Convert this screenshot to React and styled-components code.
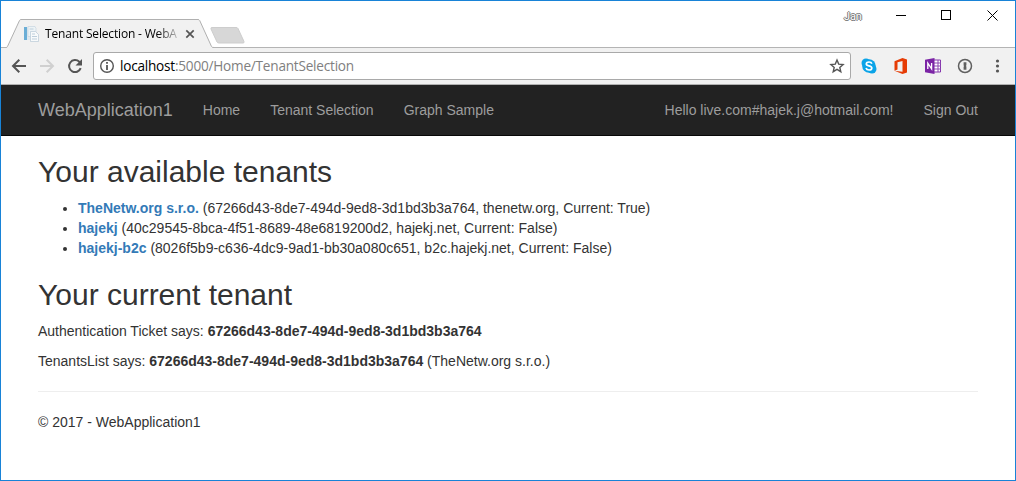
import React from 'react';
import styled, { createGlobalStyle } from 'styled-components';

const GlobalStyle = createGlobalStyle`
  *, *::before, *::after { box-sizing: border-box; }
  body { margin: 0; background: #fff; }
`;

const Window = styled.div`
  width: 1016px;
  height: 481px;
  border: 1px solid #1883d7;
  background: #fff;
  overflow: hidden;
  font-family: "Liberation Sans", Arial, sans-serif;
  font-size: 14px;
  line-height: 20px;
  color: #333;
`;

const TitleBar = styled.div`
  height: 47px;
  display: flex;
  justify-content: space-between;
  align-items: flex-start;
  background: linear-gradient(#b4b4b4, #b4b4b4) bottom / 100% 1px no-repeat;
`;

const TabStrip = styled.div`
  display: flex;
  padding: 18px 0 0 5px;
`;

const Tab = styled.div`
  position: relative;
  width: 208px;
  height: 29px;
  display: flex;
  align-items: center;
  padding-left: 17px;
`;

const TabShape = styled.svg`
  position: absolute;
  left: 0;
  top: 0;
`;

const Favicon = styled.svg`
  position: relative;
  flex: none;
`;

const TabTitle = styled.span`
  position: relative;
  width: 134px;
  margin-left: 6px;
  white-space: nowrap;
  font: 12px/18px "Open Sans", sans-serif;
  letter-spacing: -0.17px;
  color: #000;
  mask-image: linear-gradient(90deg, #000 112px, transparent 138px);
`;

const TabClose = styled.svg`
  position: relative;
  margin-left: 6px;
`;

const NewTab = styled.svg`
  margin: 7px 0 0 -4px;
`;

const Controls = styled.div`
  display: flex;
  padding: 8px 16px 0 0;
`;

const UserName = styled.span`
  width: 18px;
  margin-right: 34px;
  font: 11px/15px Roboto, sans-serif;
  letter-spacing: -0.1px;
  color: #fff;
  text-shadow: 1px 0 0 #777, -1px 0 0 #777, 0 1px 0 #777, 0 -1px 0 #777;
`;

const Toolbar = styled.div`
  height: 37px;
  display: flex;
  align-items: center;
  padding: 0 10px 1px;
  background: #f1f1f1;
  border-bottom: 1px solid #b0b0b0;
`;

const Icon = styled.svg`
  flex: none;
  margin-left: ${(p) => p.$gap || 0}px;
`;

const AddressBar = styled.div`
  width: 758px;
  height: 28px;
  margin-left: 10px;
  padding: 0 5px;
  display: flex;
  align-items: center;
  background: #fff;
  border: 1px solid #a9a9a9;
  border-radius: 3px;
`;

const Url = styled.span`
  flex: 1;
  margin-left: 5px;
  font: 13.6px/20px "Open Sans", sans-serif;
  letter-spacing: -0.22px;
  color: #808080;
`;

const Host = styled.span`
  color: #000;
`;

const Navbar = styled.nav`
  height: 51px;
  background: #222;
  border-bottom: 1px solid #080808;
`;

const Container = styled.div`
  width: 970px;
  margin: 0 auto;
  padding: 0 15px;
`;

const NavRow = styled(Container)`
  display: flex;
`;

const Brand = styled.a`
  padding: 15px 15px 15px 0;
  font-size: 18px;
  color: #9d9d9d;
`;

const NavLink = styled.a`
  padding: 15px;
  color: #9d9d9d;
`;

const NavRight = styled.div`
  display: flex;
  margin-left: auto;
  margin-right: -15px;
`;

const Heading = styled.h2`
  margin: ${(p) => p.$top}px 0 10px;
  font-size: 30px;
  font-weight: 400;
  line-height: 33px;
`;

const TenantList = styled.ul`
  margin: 0 0 10px;
  padding-left: 40px;
`;

const TenantLink = styled.a`
  font-weight: 700;
  color: #337ab7;
`;

const Text = styled.p`
  margin: 0 0 10px;
`;

const Divider = styled.hr`
  margin: 20px 0;
  border: 0;
  border-top: 1px solid #eee;
`;

const tenants = [
  ['TheNetw.org s.r.o.', '(67266d43-8de7-494d-9ed8-3d1bd3b3a764, thenetw.org, Current: True)'],
  ['hajekj', '(40c29545-8bca-4f51-8689-48e6819200d2, hajekj.net, Current: False)'],
  ['hajekj-b2c', '(8026f5b9-c636-4dc9-9ad1-bb30a080c651, b2c.hajekj.net, Current: False)'],
];

function BrowserTabs() {
  return (
    <TitleBar>
      <TabStrip>
        <Tab>
          <TabShape width="208" height="29">
            <path d="M0 28.5H1L13.5 1.5Q14 .5 15 .5H192Q193.200 .5 193.700 1.500L205.500 27.500Q206 28.500 207 28.500H208V29H0Z" fill="#f1f1f1" />
            <path d="M0 28.500Q1 28.500 1.500 27.500L13.500 1.500Q14 .5 15 .5H192Q193.200 .5 193.700 1.500L205.500 27.500Q206 28.500 208 28.500" fill="none" stroke="#b0b0b0" />
          </TabShape>
          <Favicon width="16" height="16" viewBox="0 0 16 16">
            <path d="M1 1h9v13H1z" fill="#dfe8ef" />
            <path d="M1 1h3v13H1z" fill="#6baed6" />
            <path d="M5 .5h7l1 2v8H5z" fill="#edf3f6" stroke="#c7d5df" strokeWidth=".7" />
            <path d="M7.500 5.500h5l3 3v7h-8z" fill="#f8fafb" stroke="#b9cad7" strokeWidth=".7" />
            <path d="M6.500 3h4M9 8h3M9 10.500h5M9 13h5" stroke="#bdcedb" />
          </Favicon>
          <TabTitle>Tenant Selection - WebA</TabTitle>
          <TabClose width="10" height="10" viewBox="0 0 10 10">
            <path d="M1.300 1.300l7.400 7.400M8.700 1.300L1.300 8.700" stroke="#555" strokeWidth="1.700" />
          </TabClose>
        </Tab>
        <NewTab width="36" height="19">
          <path d="M2 1.500H26Q27.500 1.500 28 2.500L34 15.500Q34.500 17 33 17H9Q7.500 17 7 16L1 3Q.5 1.500 2 1.500Z" fill="#d7d7d7" stroke="#cdcdcd" />
        </NewTab>
      </TabStrip>
      <Controls>
        <UserName>Jan</UserName>
        <svg width="103" height="14" viewBox="0 0 103 14" shapeRendering="crispEdges">
          <path d="M0 6.500h10M45.500 1.500h9v9h-9z" fill="none" stroke="#000" />
          <path d="M91.500 1.500l10 10M101.500 1.500l-10 10" fill="none" stroke="#000" shapeRendering="auto" />
        </svg>
      </Controls>
    </TitleBar>
  );
}

function BrowserToolbar() {
  return (
    <Toolbar>
      <Icon width="16" height="16" viewBox="0 0 16 16">
        <path d="M15 8H2.500M8.300 1.700L2 8l6.300 6.300" fill="none" stroke="#555" strokeWidth="2" />
      </Icon>
      <Icon $gap="12" width="16" height="16" viewBox="0 0 16 16">
        <path d="M1 8h12.500M7.700 1.700L14 8l-6.300 6.300" fill="none" stroke="#d0d0d0" strokeWidth="2" />
      </Icon>
      <Icon $gap="12" width="16" height="16" viewBox="0 0 16 16">
        <path d="M13.700 10.200A6 6 0 1 1 12.300 3.800L14 5.500" fill="none" stroke="#555" strokeWidth="2" />
        <path d="M15 1v6.500H8.500z" fill="#555" />
      </Icon>
      <AddressBar>
        <Icon width="16" height="16" viewBox="0 0 16 16">
          <circle cx="8" cy="8" r="6.300" fill="none" stroke="#555" strokeWidth="1.400" />
          <path d="M8 4v1.800M8 7v5" stroke="#555" strokeWidth="1.800" />
        </Icon>
        <Url><Host>localhost</Host>:5000/Home/TenantSelection</Url>
        <Icon width="16" height="16" viewBox="0 0 16 16">
          <path d="M8 2l1.700 4.100 4.400.4-3.300 2.900 1 4.300L8 11.400l-3.800 2.300 1-4.300L1.900 6.500l4.400-.4z" fill="none" stroke="#555" strokeWidth="1.400" />
        </Icon>
      </AddressBar>
      <Icon $gap="10" width="16" height="16" viewBox="0 0 16 16">
        <circle cx="5" cy="5" r="4.500" fill="#0ba4e8" />
        <circle cx="11" cy="11" r="4.500" fill="#0ba4e8" />
        <circle cx="8" cy="8" r="6.800" fill="#0ba4e8" />
        <path d="M10.800 5.700C10.400 4.300 9.300 4 8 4 6.400 4 5.300 4.700 5.300 5.900c0 2.600 5.500 1.300 5.500 4 0 1.300-1.200 2.100-2.800 2.100-1.500 0-2.600-.6-3-1.900" fill="none" stroke="#fff" strokeWidth="1.700" />
      </Icon>
      <Icon $gap="16" width="16" height="16" viewBox="0 0 16 16">
        <path d="M1.500 3.300L9.500 0l4.500 1.500v13L9.500 16l-8-3.200L9.500 13.700V2.900L4.500 4.200v7.200l-3 1.400z" fill="#e63c05" />
      </Icon>
      <Icon $gap="16" width="16" height="16" viewBox="0 0 16 16">
        <path d="M8 2h7.500v12H8z" fill="#fff" stroke="#8536ad" />
        <path d="M9 5h4M9 8h4M9 11h4M13 2v12M13 5h3M13 8h3M13 11h3" stroke="#8d48b2" />
        <path d="M0 1.800L9.500 0v16L0 14.200z" fill="#7b24a5" />
        <path d="M2.800 11V5.200L6.600 10.800V5" fill="none" stroke="#fff" strokeWidth="1.300" />
      </Icon>
      <Icon $gap="16" width="16" height="16" viewBox="0 0 16 16">
        <circle cx="8" cy="8" r="6.500" fill="none" stroke="#606060" strokeWidth="1.500" />
        <path d="M6.600 4.200h2.800v3l-.5.700.5.700v3.200H6.600v-3l.5-.7-.5-.7z" fill="#606060" />
      </Icon>
      <Icon $gap="16" width="16" height="16" viewBox="0 0 16 16">
        <circle cx="8.500" cy="3" r="1.600" fill="#555" />
        <circle cx="8.500" cy="8" r="1.600" fill="#555" />
        <circle cx="8.500" cy="13" r="1.600" fill="#555" />
      </Icon>
    </Toolbar>
  );
}

export default function App() {
  return (
    <>
      <GlobalStyle />
      <Window>
        <BrowserTabs />
        <BrowserToolbar />
        <Navbar>
          <NavRow>
            <Brand>WebApplication1</Brand>
            <NavLink>Home</NavLink>
            <NavLink>Tenant Selection</NavLink>
            <NavLink>Graph Sample</NavLink>
            <NavRight>
              <NavLink>Hello live.com#hajek.j@hotmail.com!</NavLink>
              <NavLink>Sign Out</NavLink>
            </NavRight>
          </NavRow>
        </Navbar>
        <Container as="main">
          <Heading $top={19}>Your available tenants</Heading>
          <TenantList>
            {tenants.map(([name, details]) => (
              <li key={name}><TenantLink>{name}</TenantLink> {details}</li>
            ))}
          </TenantList>
          <Heading $top={20}>Your current tenant</Heading>
          <Text>Authentication Ticket says: <b>67266d43-8de7-494d-9ed8-3d1bd3b3a764</b></Text>
          <Text>TenantsList says: <b>67266d43-8de7-494d-9ed8-3d1bd3b3a764</b> (TheNetw.org s.r.o.)</Text>
          <Divider />
          <Text>© 2017 - WebApplication1</Text>
        </Container>
      </Window>
    </>
  );
}
